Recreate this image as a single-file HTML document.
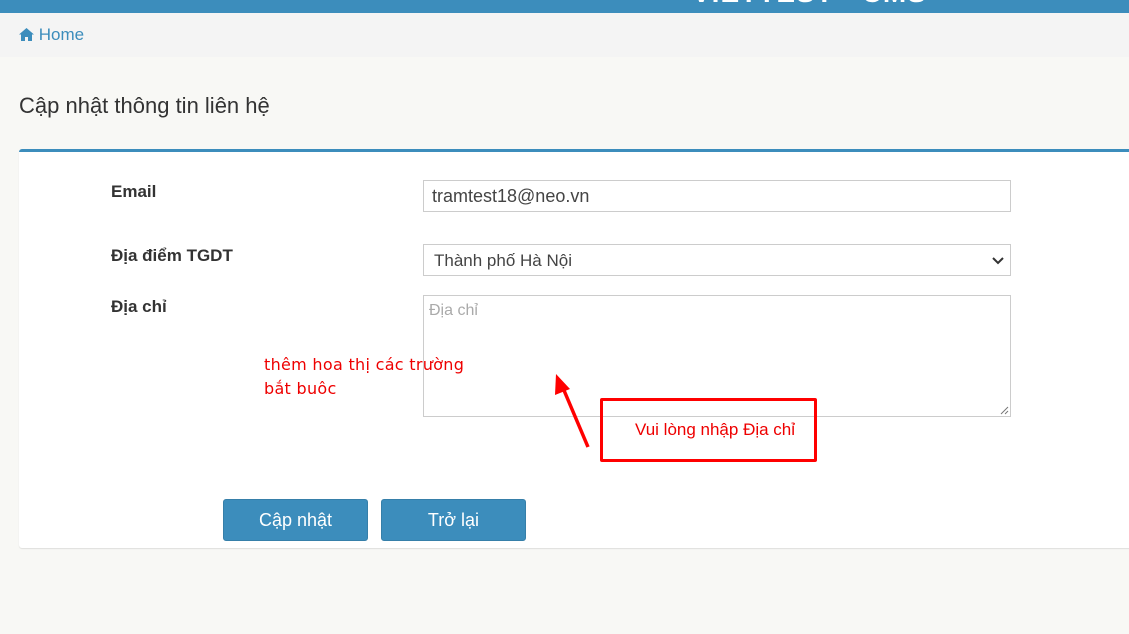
<!DOCTYPE html>
<html><head><meta charset="utf-8"><style>
*{box-sizing:border-box;margin:0;padding:0}
body{width:1129px;height:634px;overflow:hidden;background:#f8f8f5;font-family:"Liberation Sans",Arial,sans-serif;position:relative;color:#333}
.top{position:absolute;left:0;top:0;width:1129px;height:13px;background:#3c8dbc;overflow:hidden}
.top span{position:absolute;left:692px;top:-23px;color:#fff;font-size:28px;font-weight:bold;letter-spacing:1px}
.bc{position:absolute;left:0;top:13px;width:1129px;height:44px;background:#f4f4f4}
.bc a{position:absolute;left:19px;top:12px;color:#3c8dbc;font-size:17px;text-decoration:none}
h1{position:absolute;left:19px;top:93px;font-size:22px;font-weight:normal;color:#333;font-family:"Liberation Sans",Arial,sans-serif}
.card{position:absolute;left:19px;top:149px;width:1120px;height:399px;background:#fff;border-top:3px solid #3c8dbc;border-radius:3px;box-shadow:0 1px 1px rgba(0,0,0,.1)}
.lbl{position:absolute;left:111px;font-weight:bold;font-size:17px;color:#333}
.inp{position:absolute;left:423px;width:588px;border:1px solid #ccc;background:#fff;font-size:18px;color:#444}
.btn{position:absolute;top:499px;height:42px;background:#3c8dbc;border:1px solid #367fa9;border-radius:3px;color:#fff;font-size:18px;text-align:center;line-height:40px}
.ann{position:absolute;left:264px;top:353px;color:#e00;font-family:"DejaVu Sans",sans-serif;font-size:16px;line-height:24px;letter-spacing:0.3px}
.box{position:absolute;left:600px;top:398px;width:217px;height:64px;border:3px solid #f00;border-radius:2px}
.box span{position:absolute;left:32px;top:19px;color:#e00;font-size:17px}
</style></head><body>
<div class="top"><span>VIETTEST - CMS</span></div>
<div class="bc"><a><svg width="15" height="13" viewBox="0 0 15 13" style="vertical-align:-1px"><path d="M7.5 0L0 6.5h2V13h4V9h3v4h4V6.5h2z" fill="#3c8dbc"/></svg> Home</a></div>
<h1>Cập nhật thông tin liên hệ</h1>
<div class="card"></div>
<div class="lbl" style="top:182px">Email</div>
<div class="lbl" style="top:246px">Địa điểm TGDT</div>
<div class="lbl" style="top:297px">Địa chỉ</div>
<div class="inp" style="top:180px;height:32px;padding:5px 8px">tramtest18@neo.vn</div>
<div class="inp" style="top:244px;height:32px;padding:6px 10px;font-size:17px">Thành phố Hà Nội
<svg width="12" height="8" viewBox="0 0 12 8" style="position:absolute;right:6px;top:12px"><path d="M1 1l5 5 5-5" stroke="#333" stroke-width="2" fill="none"/></svg></div>
<div class="inp" style="top:295px;height:122px;padding:6px 5px;font-size:16px;color:#aaa">Địa chỉ
<svg width="10" height="10" viewBox="0 0 10 10" style="position:absolute;right:1px;bottom:1px"><path d="M9 2L2 9M9 6L6 9" stroke="#777" stroke-width="1"/></svg></div>
<div class="ann">thêm hoa thị các trường<br>bắt buôc</div>
<svg width="1129" height="634" style="position:absolute;left:0;top:0" viewBox="0 0 1129 634"><line x1="588" y1="447" x2="563" y2="388" stroke="#f00" stroke-width="3.5"/><polygon points="556,374 555,395 570,389" fill="#f00"/></svg>
<div class="box"><span>Vui lòng nhập Địa chỉ</span></div>
<div class="btn" style="left:223px;width:145px">Cập nhật</div>
<div class="btn" style="left:381px;width:145px">Trở lại</div>
</body></html>
